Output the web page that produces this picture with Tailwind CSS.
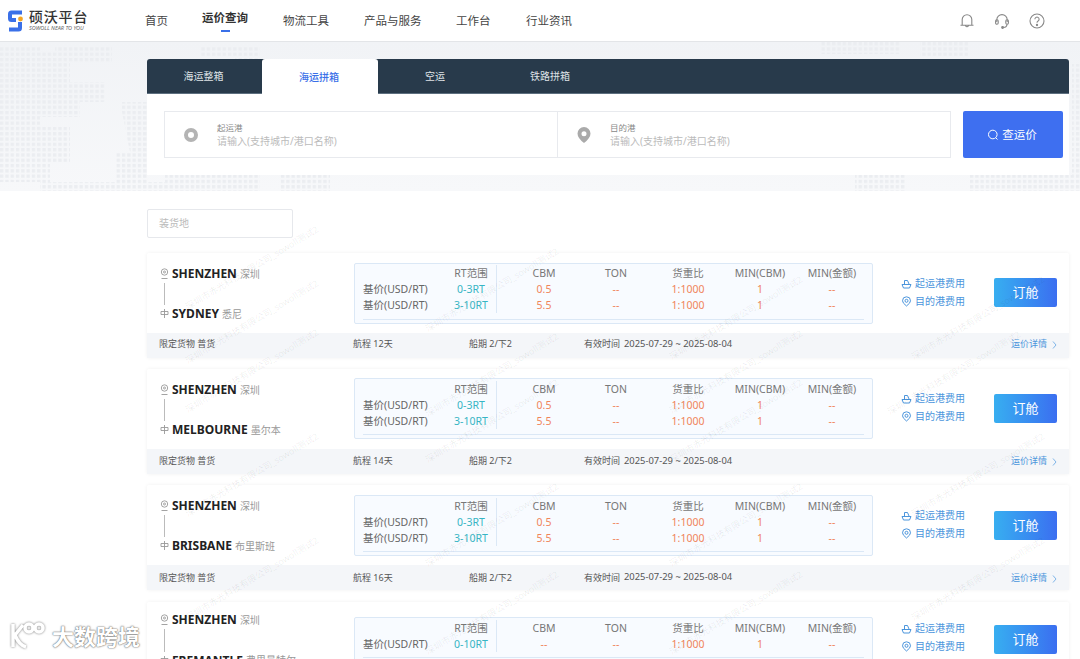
<!DOCTYPE html>
<html>
<head>
<meta charset="utf-8">
<title>硕沃平台</title>
<script src="https://cdn.jsdelivr.net/npm/@tailwindcss/browser@4"></script>
</head>
<body class="bg-white">
<div class="relative w-[1080px] h-[659px] overflow-hidden bg-white text-[#333] font-['Noto_Sans','Noto_Sans_CJK_SC',sans-serif]">

  <!-- 顶部导航 -->
  <header class="flex items-center h-[42px] bg-white border-b border-[#e3e5e8]">
    <div class="flex items-center w-[145px] pl-[8px]">
      <svg width="16" height="22" viewBox="0 0 16 22" class="mr-[5px]">
        <path d="M14 2.500H3.500Q2 2.500 2 4V8.500Q2 10 3.500 10H8" fill="none" stroke="#3a70e8" stroke-width="4"/>
        <path d="M12 12V18Q12 19.500 10.500 19.500H1" fill="none" stroke="#3a70e8" stroke-width="4"/>
        <circle cx="12.500" cy="9" r="2.400" fill="#f5a623"/>
      </svg>
      <div class="flex flex-col">
        <span class="text-[14px] leading-[16px] font-medium tracking-[0.8px] text-[#333]">硕沃平台</span>
        <span class="text-[5.500px] leading-[7px] italic text-[#666] whitespace-nowrap">SOWOLL NEAR TO YOU</span>
      </div>
    </div>
    <nav class="flex items-center text-[11.500px] text-[#444]">
      <a class="w-[57px]">首页</a>
      <a class="relative w-[81px] font-bold text-[#333] -mt-[6px]">运价查询<span class="absolute left-[19px] top-[21px] w-[9px] h-[2px] bg-[#3a70e8]"></span></a>
      <a class="w-[81px]">物流工具</a>
      <a class="w-[92px]">产品与服务</a>
      <a class="w-[70px]">工作台</a>
      <a>行业资讯</a>
    </nav>
    <div class="flex items-center gap-[19px] ml-auto mr-[35px]">
      <svg width="16" height="16" viewBox="0 0 16 16" fill="none" stroke="#888" stroke-width="1.100"><path d="M3.200 12V6.500a4.800 4.800 0 0 1 9.600 0V12M1.500 12.200h13M6.300 12.500q1.700 2.600 3.400 0"/></svg>
      <svg width="16" height="16" viewBox="0 0 16 16" fill="none" stroke="#888" stroke-width="1.100"><path d="M2.800 9V6.800a5.200 5.200 0 0 1 10.400 0V9"/><rect x="1.600" y="6.800" width="2.600" height="4.400" rx="1.200"/><rect x="11.800" y="6.800" width="2.600" height="4.400" rx="1.200"/><path d="M13 11.200q0 3-3.600 3.300"/><circle cx="8.600" cy="14.500" r="0.900" fill="#888"/></svg>
      <svg width="16" height="16" viewBox="0 0 16 16" fill="none" stroke="#888" stroke-width="1.100"><circle cx="8" cy="8" r="7"/><path d="M5.900 6.200a2.100 2.100 0 1 1 3.200 1.800q-1.100.7-1.100 1.800"/><circle cx="8" cy="12" r="0.600" fill="#888"/></svg>
    </div>
  </header>

  <!-- 查询区 -->
  <section class="relative h-[149px] pt-[17px] pl-[147px] bg-gradient-to-b from-[#f1f3f6] to-[#f7f8fa]">
    <svg class="absolute left-0 top-0" width="1080" height="149">
      <defs><pattern id="dots" width="5.300" height="5.300" patternUnits="userSpaceOnUse"><rect width="3.300" height="3.300" fill="#ebedf1"/></pattern></defs>
      <path fill="url(#dots)" d="M0 5H40V10H55V5H112V20H70V40H105V60H80V75H40V85H70V120H50V140H0ZM120 60H147V140H115V110H130ZM165 130H260V149H40V140H165ZM200 5H260V15H200ZM235 10H260V18H235ZM280 133H330V149H280ZM820 0H900V12H820ZM920 0H970V14H920ZM1072 22H1080V135H1072ZM855 133H905V149H855ZM970 133H1080V149H970Z"/>
    </svg>
    <div class="relative w-[922px]">
      <div class="flex h-[35px] rounded-t-[3px] bg-[#283a4b] text-[10px] text-[#dfe3e7] border-b border-[#5d6f7f]">
        <a class="flex items-center justify-center w-[115px] pr-[2px] pt-[1px]">海运整箱</a>
        <a class="flex items-center justify-center w-[116px] -mb-px pr-[2px] pt-[1px] bg-white rounded-t-[3px] font-medium text-[#3a70e8]">海运拼箱</a>
        <a class="flex items-center justify-center w-[114px] pt-[1px]">空运</a>
        <a class="flex items-center justify-center w-[118px] pr-[2px] pt-[1px]">铁路拼箱</a>
      </div>
      <div class="flex h-[81px] pt-[17px] pl-[17px] bg-white">
        <div class="flex w-[787px] h-[47px] border border-[#e8eaee]">
          <div class="flex items-center w-[393px] pl-[19px] border-r border-[#e8eaee]">
            <svg width="14" height="14" viewBox="0 0 14 14"><circle cx="7" cy="7" r="5" fill="none" stroke="#b4b4b4" stroke-width="4"/></svg>
            <div class="ml-[19px]">
              <p class="text-[8.500px] leading-[13px] text-[#888]">起运港</p>
              <p class="text-[10px] leading-[15px] text-[#bbb]">请输入(支持城市/港口名称)</p>
            </div>
          </div>
          <div class="flex items-center pl-[19px]">
            <svg width="14" height="16" viewBox="0 0 14 16"><path fill-rule="evenodd" fill="#aaa" d="M7 0a6.500 6.500 0 0 1 6.500 6.500Q13.500 11 7 16 .5 11 .5 6.500A6.500 6.500 0 0 1 7 0ZM7 4.200a2.500 2.500 0 1 0 0 5 2.500 2.500 0 0 0 0-5Z"/></svg>
            <div class="ml-[19px]">
              <p class="text-[8.500px] leading-[13px] text-[#888]">目的港</p>
              <p class="text-[10px] leading-[15px] text-[#bbb]">请输入(支持城市/港口名称)</p>
            </div>
          </div>
        </div>
        <button class="flex items-center justify-center gap-[3px] w-[100px] h-[47px] ml-[12px] pr-[2px] rounded-[2px] bg-[#3e6ff0] text-[11.500px] text-white">
          <svg width="12" height="12" viewBox="0 0 12 12" fill="none" stroke="#fff" stroke-width="1"><circle cx="5.800" cy="5.500" r="4.300"/><path d="M8.800 8.800l1.700 1.700"/></svg>查运价
        </button>
      </div>
    </div>
  </section>

  <!-- 运价列表 -->
  <section class="pl-[147px] w-[1069px]">
    <div class="flex items-center w-[146px] h-[29px] mt-[18px] mb-[15px] pl-[11px] bg-white border border-[#e6e8ec] rounded-[2px] text-[10px] text-[#bbb]">装货地</div>

    <!-- 卡片 1 -->
    <article class="h-[105px] rounded-[2px] shadow-[0_0_4px_rgba(0,0,0,0.06)]">
      <div class="flex h-[80px]">
        <div class="w-[207px] pl-[13px] pt-[13px]">
          <div class="flex items-center h-[16px]">
            <svg width="9" height="12" viewBox="0 0 9 12" fill="none" stroke="#999" stroke-width="0.900" class="mr-[3px]"><circle cx="4.500" cy="4" r="3.200"/><circle cx="4.500" cy="4" r="1"/><path d="M1.500 10.500h6"/></svg>
            <span class="text-[12px] font-bold text-[#222]">SHENZHEN</span><span class="ml-[3px] text-[10px] text-[#999]">深圳</span>
          </div>
          <div class="w-px h-[22px] ml-[4px] mt-[1px] mb-[1px] bg-[#bbb]"></div>
          <div class="flex items-center h-[16px]">
            <svg width="9" height="12" viewBox="0 0 9 12" fill="none" stroke="#999" stroke-width="0.900" class="mr-[3px]"><path d="M1 3.500h7v3H1zM4.500 1v9"/></svg>
            <span class="text-[12px] font-bold text-[#222]">SYDNEY</span><span class="ml-[3px] text-[10px] text-[#999]">悉尼</span>
          </div>
        </div>
        <div class="relative flex w-[519px] h-[61px] mt-[10px] pl-[8px] pt-[1px] rounded-[2px] border border-[#dbe8f6] bg-[#f8fbff] text-[10.500px] leading-[16px] text-center text-[#777]">
          <div class="w-[85px] text-left text-[#666]"><p class="h-[16px]"></p><p>基价(USD/RT)</p><p>基价(USD/RT)</p></div>
          <div class="w-[49px] h-[48px] pr-[2px] border-r border-[#dbe8f6]"><p>RT范围</p><p class="text-[#37b5c4]">0-3RT</p><p class="text-[#37b5c4]">3-10RT</p></div>
          <div class="w-[72px] ml-[11px]"><p>CBM</p><p class="text-[#f0855a]">0.5</p><p class="text-[#f0855a]">5.5</p></div>
          <div class="w-[72px]"><p>TON</p><p class="text-[#f0855a]">--</p><p class="text-[#f0855a]">--</p></div>
          <div class="w-[72px]"><p>货重比</p><p class="text-[#f0855a]">1:1000</p><p class="text-[#f0855a]">1:1000</p></div>
          <div class="w-[72px]"><p>MIN(CBM)</p><p class="text-[#f0855a]">1</p><p class="text-[#f0855a]">1</p></div>
          <div class="w-[72px]"><p>MIN(金额)</p><p class="text-[#f0855a]">--</p><p class="text-[#f0855a]">--</p></div>
          <span class="absolute left-[8px] right-[8px] bottom-[3px] h-px bg-[#dbe8f6]"></span>
        </div>
        <div class="w-[121px] pl-[28px] pt-[22px] text-[10px] leading-[17.500px] text-[#4b95dc]">
          <p class="flex items-center gap-[3px]"><svg width="11" height="10" viewBox="0 0 11 10" fill="none" stroke="#4b95dc"><path d="M3.500 5V1.500h3L8 5M1 5.500h9L8.500 9h-6z"/></svg>起运港费用</p>
          <p class="flex items-center gap-[3px]"><svg width="11" height="11" viewBox="0 0 11 11" fill="none" stroke="#4b95dc"><path d="M5.500 10Q1.500 7 1.500 4.800a4 4 0 0 1 8 0Q9.500 7 5.500 10Z"/><circle cx="5.500" cy="4.800" r="1.500"/></svg>目的港费用</p>
        </div>
        <button class="w-[63px] h-[29px] mt-[25px] rounded-[2px] bg-gradient-to-r from-[#38aef0] to-[#3b6ef0] text-[13px] text-white">订舱</button>
      </div>
      <div class="flex items-center h-[25px] pl-[12px] pb-[3px] bg-[#f4f6f9] text-[9px] text-[#555]">
        <span class="w-[194px]">限定货物 普货</span><span class="w-[116px]">航程 12天</span><span class="w-[115px]">船期 2/下2</span><span class="w-[40px]">有效时间</span><span class="w-[387px] text-[9.400px]">2025-07-29 ~ 2025-08-04</span>
        <span class="text-[#4b95dc]">运价详情</span><svg width="5" height="8" viewBox="0 0 5 8" fill="none" stroke="#7fb5e8" class="ml-[5px] mt-[2px]"><path d="M1 .5l3 3.500-3 3.500"/></svg>
      </div>
    </article>

    <!-- 卡片 2 -->
    <article class="h-[105px] mt-[11px] rounded-[2px] shadow-[0_0_4px_rgba(0,0,0,0.06)]">
      <div class="flex h-[80px]">
        <div class="w-[207px] pl-[13px] pt-[13px]">
          <div class="flex items-center h-[16px]">
            <svg width="9" height="12" viewBox="0 0 9 12" fill="none" stroke="#999" stroke-width="0.900" class="mr-[3px]"><circle cx="4.500" cy="4" r="3.200"/><circle cx="4.500" cy="4" r="1"/><path d="M1.500 10.500h6"/></svg>
            <span class="text-[12px] font-bold text-[#222]">SHENZHEN</span><span class="ml-[3px] text-[10px] text-[#999]">深圳</span>
          </div>
          <div class="w-px h-[22px] ml-[4px] mt-[1px] mb-[1px] bg-[#bbb]"></div>
          <div class="flex items-center h-[16px]">
            <svg width="9" height="12" viewBox="0 0 9 12" fill="none" stroke="#999" stroke-width="0.900" class="mr-[3px]"><path d="M1 3.500h7v3H1zM4.500 1v9"/></svg>
            <span class="text-[12px] font-bold text-[#222]">MELBOURNE</span><span class="ml-[3px] text-[10px] text-[#999]">墨尔本</span>
          </div>
        </div>
        <div class="relative flex w-[519px] h-[61px] mt-[9px] pl-[8px] pt-[2px] rounded-[2px] border border-[#dbe8f6] bg-[#f8fbff] text-[10.500px] leading-[16px] text-center text-[#777]">
          <div class="w-[85px] text-left text-[#666]"><p class="h-[16px]"></p><p>基价(USD/RT)</p><p>基价(USD/RT)</p></div>
          <div class="w-[49px] h-[48px] pr-[2px] border-r border-[#dbe8f6]"><p>RT范围</p><p class="text-[#37b5c4]">0-3RT</p><p class="text-[#37b5c4]">3-10RT</p></div>
          <div class="w-[72px] ml-[11px]"><p>CBM</p><p class="text-[#f0855a]">0.5</p><p class="text-[#f0855a]">5.5</p></div>
          <div class="w-[72px]"><p>TON</p><p class="text-[#f0855a]">--</p><p class="text-[#f0855a]">--</p></div>
          <div class="w-[72px]"><p>货重比</p><p class="text-[#f0855a]">1:1000</p><p class="text-[#f0855a]">1:1000</p></div>
          <div class="w-[72px]"><p>MIN(CBM)</p><p class="text-[#f0855a]">1</p><p class="text-[#f0855a]">1</p></div>
          <div class="w-[72px]"><p>MIN(金额)</p><p class="text-[#f0855a]">--</p><p class="text-[#f0855a]">--</p></div>
          <span class="absolute left-[8px] right-[8px] bottom-[3px] h-px bg-[#dbe8f6]"></span>
        </div>
        <div class="w-[121px] pl-[28px] pt-[21px] text-[10px] leading-[17.500px] text-[#4b95dc]">
          <p class="flex items-center gap-[3px]"><svg width="11" height="10" viewBox="0 0 11 10" fill="none" stroke="#4b95dc"><path d="M3.500 5V1.500h3L8 5M1 5.500h9L8.500 9h-6z"/></svg>起运港费用</p>
          <p class="flex items-center gap-[3px]"><svg width="11" height="11" viewBox="0 0 11 11" fill="none" stroke="#4b95dc"><path d="M5.500 10Q1.500 7 1.500 4.800a4 4 0 0 1 8 0Q9.500 7 5.500 10Z"/><circle cx="5.500" cy="4.800" r="1.500"/></svg>目的港费用</p>
        </div>
        <button class="w-[63px] h-[29px] mt-[25px] rounded-[2px] bg-gradient-to-r from-[#38aef0] to-[#3b6ef0] text-[13px] text-white">订舱</button>
      </div>
      <div class="flex items-center h-[25px] pl-[12px] pb-[1px] bg-[#f4f6f9] text-[9px] text-[#555]">
        <span class="w-[194px]">限定货物 普货</span><span class="w-[116px]">航程 14天</span><span class="w-[115px]">船期 2/下2</span><span class="w-[40px]">有效时间</span><span class="w-[387px] text-[9.400px]">2025-07-29 ~ 2025-08-04</span>
        <span class="text-[#4b95dc]">运价详情</span><svg width="5" height="8" viewBox="0 0 5 8" fill="none" stroke="#7fb5e8" class="ml-[5px] mt-[2px]"><path d="M1 .5l3 3.500-3 3.500"/></svg>
      </div>
    </article>

    <!-- 卡片 3 -->
    <article class="h-[105px] mt-[11px] rounded-[2px] shadow-[0_0_4px_rgba(0,0,0,0.06)]">
      <div class="flex h-[80px]">
        <div class="w-[207px] pl-[13px] pt-[13px]">
          <div class="flex items-center h-[16px]">
            <svg width="9" height="12" viewBox="0 0 9 12" fill="none" stroke="#999" stroke-width="0.900" class="mr-[3px]"><circle cx="4.500" cy="4" r="3.200"/><circle cx="4.500" cy="4" r="1"/><path d="M1.500 10.500h6"/></svg>
            <span class="text-[12px] font-bold text-[#222]">SHENZHEN</span><span class="ml-[3px] text-[10px] text-[#999]">深圳</span>
          </div>
          <div class="w-px h-[22px] ml-[4px] mt-[1px] mb-[1px] bg-[#bbb]"></div>
          <div class="flex items-center h-[16px]">
            <svg width="9" height="12" viewBox="0 0 9 12" fill="none" stroke="#999" stroke-width="0.900" class="mr-[3px]"><path d="M1 3.500h7v3H1zM4.500 1v9"/></svg>
            <span class="text-[12px] font-bold text-[#222]">BRISBANE</span><span class="ml-[3px] text-[10px] text-[#999]">布里斯班</span>
          </div>
        </div>
        <div class="relative flex w-[519px] h-[61px] mt-[10px] pl-[8px] pt-[2px] rounded-[2px] border border-[#dbe8f6] bg-[#f8fbff] text-[10.500px] leading-[16px] text-center text-[#777]">
          <div class="w-[85px] text-left text-[#666]"><p class="h-[16px]"></p><p>基价(USD/RT)</p><p>基价(USD/RT)</p></div>
          <div class="w-[49px] h-[48px] pr-[2px] border-r border-[#dbe8f6]"><p>RT范围</p><p class="text-[#37b5c4]">0-3RT</p><p class="text-[#37b5c4]">3-10RT</p></div>
          <div class="w-[72px] ml-[11px]"><p>CBM</p><p class="text-[#f0855a]">0.5</p><p class="text-[#f0855a]">5.5</p></div>
          <div class="w-[72px]"><p>TON</p><p class="text-[#f0855a]">--</p><p class="text-[#f0855a]">--</p></div>
          <div class="w-[72px]"><p>货重比</p><p class="text-[#f0855a]">1:1000</p><p class="text-[#f0855a]">1:1000</p></div>
          <div class="w-[72px]"><p>MIN(CBM)</p><p class="text-[#f0855a]">1</p><p class="text-[#f0855a]">1</p></div>
          <div class="w-[72px]"><p>MIN(金额)</p><p class="text-[#f0855a]">--</p><p class="text-[#f0855a]">--</p></div>
          <span class="absolute left-[8px] right-[8px] bottom-[3px] h-px bg-[#dbe8f6]"></span>
        </div>
        <div class="w-[121px] pl-[28px] pt-[22px] text-[10px] leading-[17.500px] text-[#4b95dc]">
          <p class="flex items-center gap-[3px]"><svg width="11" height="10" viewBox="0 0 11 10" fill="none" stroke="#4b95dc"><path d="M3.500 5V1.500h3L8 5M1 5.500h9L8.500 9h-6z"/></svg>起运港费用</p>
          <p class="flex items-center gap-[3px]"><svg width="11" height="11" viewBox="0 0 11 11" fill="none" stroke="#4b95dc"><path d="M5.500 10Q1.500 7 1.500 4.800a4 4 0 0 1 8 0Q9.500 7 5.500 10Z"/><circle cx="5.500" cy="4.800" r="1.500"/></svg>目的港费用</p>
        </div>
        <button class="w-[63px] h-[29px] mt-[26px] rounded-[2px] bg-gradient-to-r from-[#38aef0] to-[#3b6ef0] text-[13px] text-white">订舱</button>
      </div>
      <div class="flex items-center h-[25px] pl-[12px] bg-[#f4f6f9] text-[9px] text-[#555]">
        <span class="w-[194px]">限定货物 普货</span><span class="w-[116px]">航程 16天</span><span class="w-[115px]">船期 2/下2</span><span class="w-[40px]">有效时间</span><span class="w-[387px] text-[9.400px]">2025-07-29 ~ 2025-08-04</span>
        <span class="text-[#4b95dc]">运价详情</span><svg width="5" height="8" viewBox="0 0 5 8" fill="none" stroke="#7fb5e8" class="ml-[5px] mt-[2px]"><path d="M1 .5l3 3.500-3 3.500"/></svg>
      </div>
    </article>

    <!-- 卡片 4 -->
    <article class="h-[105px] mt-[12px] rounded-[2px] shadow-[0_0_4px_rgba(0,0,0,0.06)]">
      <div class="flex h-[80px]">
        <div class="w-[207px] pl-[13px] pt-[10px]">
          <div class="flex items-center h-[16px]">
            <svg width="9" height="12" viewBox="0 0 9 12" fill="none" stroke="#999" stroke-width="0.900" class="mr-[3px]"><circle cx="4.500" cy="4" r="3.200"/><circle cx="4.500" cy="4" r="1"/><path d="M1.500 10.500h6"/></svg>
            <span class="text-[12px] font-bold text-[#222]">SHENZHEN</span><span class="ml-[3px] text-[10px] text-[#999]">深圳</span>
          </div>
          <div class="w-px h-[23px] ml-[4px] mt-[1px] mb-[1px] bg-[#bbb]"></div>
          <div class="flex items-center h-[15px]">
            <svg width="9" height="12" viewBox="0 0 9 12" fill="none" stroke="#999" stroke-width="0.900" class="mr-[3px]"><path d="M1 3.500h7v3H1zM4.500 1v9"/></svg>
            <span class="text-[12px] font-bold text-[#222]">FREMANTLE</span><span class="ml-[3px] text-[10px] text-[#999]">弗里曼特尔</span>
          </div>
        </div>
        <div class="relative flex w-[519px] h-[45px] mt-[15px] pl-[8px] pt-[2px] rounded-[2px] border border-[#dbe8f6] bg-[#f8fbff] text-[10.500px] leading-[16px] text-center text-[#777]">
          <div class="w-[85px] text-left text-[#666]"><p class="h-[16px]"></p><p>基价(USD/RT)</p></div>
          <div class="w-[49px] h-[32px] pr-[2px] border-r border-[#dbe8f6]"><p>RT范围</p><p class="text-[#37b5c4]">0-10RT</p></div>
          <div class="w-[72px] ml-[11px]"><p>CBM</p><p class="text-[#f0855a]">--</p></div>
          <div class="w-[72px]"><p>TON</p><p class="text-[#f0855a]">--</p></div>
          <div class="w-[72px]"><p>货重比</p><p class="text-[#f0855a]">1:1000</p></div>
          <div class="w-[72px]"><p>MIN(CBM)</p><p class="text-[#f0855a]">1</p></div>
          <div class="w-[72px]"><p>MIN(金额)</p><p class="text-[#f0855a]">--</p></div>
          <span class="absolute left-[8px] right-[8px] bottom-[3px] h-px bg-[#dbe8f6]"></span>
        </div>
        <div class="w-[121px] pl-[28px] pt-[18px] text-[10px] leading-[17.500px] text-[#4b95dc]">
          <p class="flex items-center gap-[3px]"><svg width="11" height="10" viewBox="0 0 11 10" fill="none" stroke="#4b95dc"><path d="M3.500 5V1.500h3L8 5M1 5.500h9L8.500 9h-6z"/></svg>起运港费用</p>
          <p class="flex items-center gap-[3px]"><svg width="11" height="11" viewBox="0 0 11 11" fill="none" stroke="#4b95dc"><path d="M5.500 10Q1.500 7 1.500 4.800a4 4 0 0 1 8 0Q9.500 7 5.500 10Z"/><circle cx="5.500" cy="4.800" r="1.500"/></svg>目的港费用</p>
        </div>
        <button class="w-[63px] h-[29px] mt-[23px] rounded-[2px] bg-gradient-to-r from-[#38aef0] to-[#3b6ef0] text-[13px] text-white">订舱</button>
      </div>
    </article>
  </section>

  <!-- 水印 -->
  <svg class="absolute left-0 top-0 pointer-events-none" width="1080" height="659" font-size="9" fill="#000" fill-opacity="0.08">
    <text transform="translate(188 310) rotate(-31)">深圳市赤光科技有限公司_sowoll测试2</text>
    <text transform="translate(188 364) rotate(-31)">深圳市赤光科技有限公司_sowoll测试2</text>
    <text transform="translate(188 413) rotate(-31)">深圳市赤光科技有限公司_sowoll测试2</text>
    <text transform="translate(188 517) rotate(-31)">深圳市赤光科技有限公司_sowoll测试2</text>
    <text transform="translate(188 621) rotate(-31)">深圳市赤光科技有限公司_sowoll测试2</text>
    <text transform="translate(428 332) rotate(-31)">深圳市赤光科技有限公司_sowoll测试2</text>
    <text transform="translate(428 417) rotate(-31)">深圳市赤光科技有限公司_sowoll测试2</text>
    <text transform="translate(428 463) rotate(-31)">深圳市赤光科技有限公司_sowoll测试2</text>
    <text transform="translate(428 567) rotate(-31)">深圳市赤光科技有限公司_sowoll测试2</text>
    <text transform="translate(428 655) rotate(-31)">深圳市赤光科技有限公司_sowoll测试2</text>
    <text transform="translate(672 360) rotate(-31)">深圳市赤光科技有限公司_sowoll测试2</text>
    <text transform="translate(672 414) rotate(-31)">深圳市赤光科技有限公司_sowoll测试2</text>
    <text transform="translate(672 463) rotate(-31)">深圳市赤光科技有限公司_sowoll测试2</text>
    <text transform="translate(672 567) rotate(-31)">深圳市赤光科技有限公司_sowoll测试2</text>
    <text transform="translate(672 655) rotate(-31)">深圳市赤光科技有限公司_sowoll测试2</text>
    <text transform="translate(914 360) rotate(-31)">深圳市赤光科技有限公司_sowoll测试2</text>
    <text transform="translate(890 415) rotate(-31)">深圳市赤光科技有限公司_sowoll测试2</text>
    <text transform="translate(914 517) rotate(-31)">深圳市赤光科技有限公司_sowoll测试2</text>
    <text transform="translate(914 621) rotate(-31)">深圳市赤光科技有限公司_sowoll测试2</text>
  </svg>

  <!-- 左下角水印 -->
  <div class="absolute left-[9px] top-[621px] flex items-center pointer-events-none">
    <svg width="40" height="30" viewBox="0 0 40 30" fill="none" stroke="#fff" stroke-width="3.500" class="drop-shadow-[0_0_1px_#777]">
      <path d="M4 3V26M14 4L6 14q4 10 11 12"/>
      <circle cx="20" cy="7" r="4"/><circle cx="30" cy="7" r="4"/>
    </svg>
    <span class="ml-[3px] text-[22px] leading-[30px] font-bold text-white [text-shadow:0_0_2px_#666,0_0_1px_#666]">大数跨境</span>
  </div>
</div>
</body>
</html>
